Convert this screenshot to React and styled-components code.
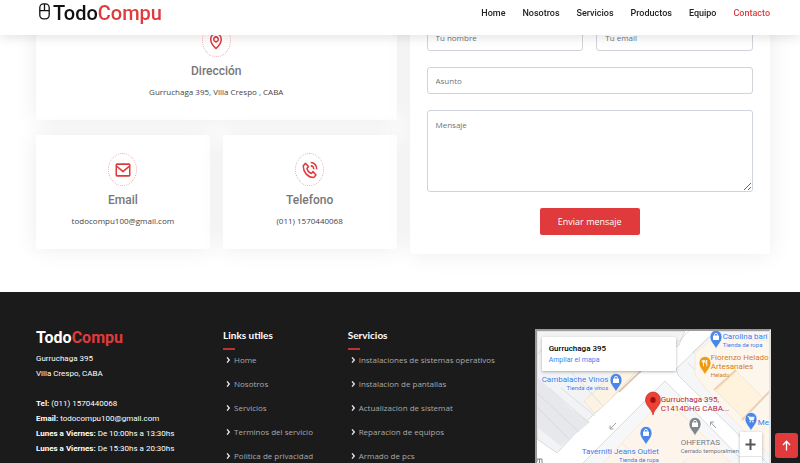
import React from 'react';
import styled, { createGlobalStyle, css } from 'styled-components';
import { BiMap, BiEnvelope, BiPhoneCall, BiChevronRight } from 'react-icons/bi';

const RED = '#e03a3c';
const BODY = '"Open Sans", "Noto Sans", sans-serif';
const HEAD = 'Roboto, "Liberation Sans", sans-serif';

const GlobalStyle = createGlobalStyle`
  *, *::before, *::after { box-sizing: border-box; }
  body { margin: 0; background: #fff; color: #444; font-family: ${BODY}; font-size: 8px; }
  h2, h3, h4, p, ul { margin: 0; padding: 0; }
  ul { list-style: none; }
  a { text-decoration: none; }
`;

const Page = styled.div`
  height: 100vh;
  overflow-y: auto;
  scrollbar-width: none;
`;

/* Header */
const Header = styled.header`
  position: fixed;
  inset: 0 0 auto;
  z-index: 10;
  display: flex;
  align-items: center;
  justify-content: space-between;
  height: 35px;
  padding: 0 30px 9px 36px;
  background: #fff;
  box-shadow: 0 2px 12px rgba(0, 0, 0, 0.12);
`;

const Brand = styled.a`
  display: flex;
  align-items: center;
  gap: 3px;
  padding-left: 3px;
  font: 500 20px/24px ${HEAD};
  color: #111;
  span { color: ${RED}; }
  svg { width: 11px; height: 17px; margin-bottom: 3px; }
`;

const Nav = styled.nav`
  display: flex;
  gap: 17px;
`;

const NavLink = styled.a`
  font: 500 9px/12px ${HEAD};
  color: ${(p) => (p.$active ? RED : '#222')};
`;

/* Contact */
const Contact = styled.main`
  display: grid;
  grid-template-columns: 1fr 1fr;
  align-items: start;
  gap: 13px;
  padding: 6px 30px 38px 36px;
  background: #fff;
`;

const cardSurface = css`
  background: #fff;
  border-radius: 2px;
  box-shadow: 0 0 24px rgba(0, 0, 0, 0.08);
`;

const InfoGrid = styled.div`
  display: grid;
  grid-template-columns: 1fr 1fr;
  gap: 15px 13px;
`;

const InfoCard = styled.section`
  ${cardSurface}
  grid-column: ${(p) => (p.$wide ? '1 / -1' : 'auto')};
  display: flex;
  flex-direction: column;
  align-items: center;
  padding: 18px 8px 22px;
  text-align: center;
`;

const IconRing = styled.div`
  display: grid;
  place-items: center;
  width: 29px;
  height: 33px;
  border: 1px dotted #eeb0b1;
  border-radius: 50%;
  color: ${RED};
  svg { width: 18px; height: 20px; }
`;

const InfoTitle = styled.h3`
  margin-top: 6px;
  font: 500 12px/16px ${HEAD};
  color: #777;
`;

const InfoText = styled.p`
  margin-top: 7px;
  line-height: 12px;
`;

const Form = styled.form`
  ${cardSurface}
  display: grid;
  grid-template-columns: 1fr 1fr;
  gap: 16px 13px;
  padding: 18px 17px 19px;
`;

const field = css`
  display: block;
  width: 100%;
  min-width: 0;
  padding: 0 8px;
  border: 1px solid #ced4da;
  border-radius: 3px;
  background: #fff;
  color: #444;
  font: 8px/12px ${BODY};
  &::placeholder { color: #6c757d; opacity: 1; }
`;

const Input = styled.input`
  ${field}
  height: 27px;
  grid-column: ${(p) => (p.$wide ? '1 / -1' : 'auto')};
`;

const TextArea = styled.textarea`
  ${field}
  grid-column: 1 / -1;
  height: 82px;
  padding-top: 8px;
  resize: vertical;
`;

const Submit = styled.button`
  grid-column: 1 / -1;
  justify-self: center;
  width: 100px;
  height: 27px;
  border: 0;
  border-radius: 2px;
  background: ${RED};
  color: #fff;
  font: 9px/12px ${BODY};
  cursor: pointer;
`;

/* Footer */
const Footer = styled.footer`
  display: grid;
  grid-template-columns: repeat(12, minmax(0, 1fr));
  align-items: start;
  gap: 13px;
  padding: 36px 29px 30px 36px;
  background: #1b1b1b;
  color: #fff;
`;

const Column = styled.section`
  grid-column: span ${(p) => p.$span};
`;

const FooterBrand = styled.h2`
  font: 700 16px/20px ${HEAD};
  span { color: ${RED}; }
`;

const Address = styled.p`
  margin-top: ${(p) => (p.$spaced ? 15 : 3)}px;
  font: 400 8px/15px ${HEAD};
  white-space: nowrap;
`;

const FooterTitle = styled.h4`
  font: 700 10px/14px Lato, ${HEAD};
  &::after {
    content: '';
    display: block;
    width: 12px;
    height: 2px;
    margin-top: 6px;
    background: #b93234;
  }
`;

const LinkList = styled.ul`
  display: grid;
  gap: 12px;
  margin-top: 4px;
`;

const FooterLink = styled.a`
  display: flex;
  align-items: center;
  gap: 1px;
  color: #aaa;
  line-height: 12px;
  white-space: nowrap;
  svg { flex: none; width: 10px; height: 12px; color: #fff; stroke: #fff; stroke-width: 1; }
`;

/* Map */
const MapFrame = styled.section`
  grid-column: span 4;
  position: relative;
  height: 164px;
  margin-top: 1px;
  overflow: hidden;
  border: 2px solid #9b9b9b;
  border-right-color: #e4e4e4;
  background: #f3f4f6;
  font-family: ${HEAD};
`;

const MapDrawing = styled.svg`
  display: block;
  width: 100%;
  height: 100%;
`;

const Place = styled.div`
  position: absolute;
  left: ${(p) => p.$x}px;
  top: ${(p) => p.$y}px;
  color: ${(p) => p.$color};
  font-size: 8px;
  line-height: 9px;
  text-align: ${(p) => p.$align || 'left'};
  white-space: nowrap;
  text-shadow: 0 0 1px #fff, 0 0 2px #fff;
  small { display: block; font-size: 6px; line-height: 7px; }
`;

const MapCard = styled.div`
  position: absolute;
  left: 5px;
  top: 6px;
  display: flex;
  flex-direction: column;
  gap: 1px;
  width: 134px;
  height: 34px;
  padding: 6px 7px;
  background: #fff;
  border-radius: 1px;
  box-shadow: 0 1px 3px rgba(0, 0, 0, 0.3);
  strong { font-size: 8px; line-height: 11px; font-weight: 500; color: #000; }
  a { font-size: 7px; line-height: 11px; color: #427fed; }
`;

const ZoomBox = styled.div`
  position: absolute;
  top: 101px;
  right: 7px;
  display: grid;
  width: 22px;
  background: #fff;
  box-shadow: 0 1px 3px rgba(0, 0, 0, 0.3);
`;

const ZoomButton = styled.button`
  display: grid;
  place-items: center;
  height: 25px;
  padding: 0;
  border: 0;
  border-bottom: 1px solid #e6e6e6;
  background: none;
  svg { width: 11px; height: 13px; }
`;

const BackToTop = styled.a`
  position: fixed;
  right: 2px;
  bottom: 5px;
  z-index: 11;
  display: grid;
  place-items: center;
  width: 23px;
  height: 25px;
  border-radius: 3px;
  background: ${RED};
  svg { width: 9px; height: 11px; }
`;

function MouseIcon() {
  return (
    <svg viewBox="0 0 11 17" fill="none" stroke="#111" strokeWidth="1.3" aria-hidden="true">
      <rect x="0.8" y="0.9" width="9.4" height="15" rx="3.8" />
      <path d="M0.8 7.6H10.2M5.5 0.9V7.6" />
    </svg>
  );
}

const glyphs = {
  bag: <><rect x="-3" y="-1.5" width="6" height="4.5" rx="0.5" fill="#fff" /><path d="M-1.5 -1.3V-2.2A1.5 1.5 0 0 1 1.5 -2.2V-1.3" fill="none" stroke="#fff" strokeWidth="0.9" /></>,
  fork: <path d="M-1.5 3.2V-3M-2.7 -3V-0.8H-0.3V-3M1.8 3.2V-3Q0.7 -2 0.9 0.4H1.8" fill="none" stroke="#fff" strokeWidth="0.9" />,
  cart: <><path d="M-3.3 -2.6H-2.2L-1.1 1.1H2.2L3.2 -1.8H-2" fill="#fff" stroke="#fff" strokeWidth="0.8" /><circle cx="-0.8" cy="2.7" r="0.8" fill="#fff" /><circle cx="1.9" cy="2.7" r="0.8" fill="#fff" /></>,
};

function Pin({ x, y, color, glyph }) {
  return (
    <g transform={`translate(${x} ${y})`}>
      <path d="M0 12C-0.9 8.6 -6 5 -6 0A6 6.6 0 0 1 6 0C6 5 0.9 8.6 0 12Z" fill={color} stroke="#fff" strokeWidth="0.6" />
      {glyphs[glyph]}
    </g>
  );
}

function StreetMap() {
  return (
    <MapDrawing viewBox="0 0 233 160" preserveAspectRatio="xMinYMin slice" aria-hidden="true">
      <rect width="233" height="160" fill="#fff" />
      <g stroke="#cfd3d8" strokeWidth="0.8">
        <path d="M0 0H148L142 14L102 41L52 88L20 122L0 108Z" fill="#f1f3f5" />
        <path d="M139 38L179 0H233V135L141 44Z" fill="#f4f6f8" />
        <path d="M128 50L212 136L236 160H18L48 130Z" fill="#f6f7f9" />
      </g>
      <path d="M0 46L34 78L53 91L24 115L0 96Z" fill="#e6e8eb" />
      <path d="M57 82L47 70L84 36H103L67 75Z" fill="#fdf3e4" stroke="#f3dfc4" strokeWidth="0.8" />
      <path d="M82 61L104 40" fill="none" stroke="#e3bf9c" strokeWidth="1.5" />
      <g fill="none" stroke="#d3d6da" strokeWidth="0.7">
        <path d="M0 62L42 101M12 57L51 91M24 57L58 85M0 24L5 18M35 42L66 75M0 76L32 108" />
        <path d="M138 14L152 0M155 22L178 0M151 32L160 41" />
      </g>
      <path d="M128 66L193 131L205 160H45L68 130Z" fill="#fdf5eb" stroke="#fae6cd" strokeWidth="0.8" />
      <path d="M85 112L106 131L78 160M128 66L150 88M118 160L150 128" fill="none" stroke="#f6e2ca" strokeWidth="0.8" />
      <path d="M158 22L178 6L233 10V124L217 110L186 78L158 44Z" fill="#fdf6ec" stroke="#fae6cd" strokeWidth="0.8" />
      <path d="M199 40L226 67L206 87L179 60Z" fill="#fff3dd" stroke="#f7dfbd" strokeWidth="0.8" />
      <path d="M199 39L177 59M233 60L205 89" fill="none" stroke="#ebd0b8" strokeWidth="2" />
      <g fill="none" stroke="#9aa0a6" strokeWidth="1">
        <path d="M79 92L73 98M73 94.5V98H76.5M179 97L173.5 91M173.5 94.5V91H177" />
      </g>
      <Pin x={179} y={6} color="#4a86e8" glyph="bag" />
      <Pin x={168} y={32} color="#f09a14" glyph="fork" />
      <Pin x={79} y={49} color="#4a86e8" glyph="bag" />
      <Pin x={109} y={102} color="#4a86e8" glyph="bag" />
      <Pin x={158} y={93} color="#80868b" glyph="bag" />
      <Pin x={214} y={88} color="#4a86e8" glyph="cart" />
      <path d="M116 84C115 78 108.5 75 108.5 69A7.5 8 0 0 1 123.5 69C123.5 75 117 78 116 84Z" fill="#ea4335" stroke="#c5221f" strokeWidth="0.6" />
      <ellipse cx="116" cy="69" rx="2.7" ry="3" fill="#a50e0e" />
      <path d="M0 131V128H5V132M2.5 128V132" fill="none" stroke="#5f6368" strokeWidth="0.8" />
    </MapDrawing>
  );
}

const navItems = ['Home', 'Nosotros', 'Servicios', 'Productos', 'Equipo', 'Contacto'];
const usefulLinks = ['Home', 'Nosotros', 'Servicios', 'Terminos del servicio', 'Politica de privacidad'];
const services = ['Instalaciones de sistemas operativos', 'Instalacion de pantallas', 'Actualizacion de sistemat', 'Reparacion de equipos', 'Armado de pcs'];

function Info({ icon: Icon, title, text, wide }) {
  return (
    <InfoCard $wide={wide}>
      <IconRing><Icon preserveAspectRatio="none" aria-hidden="true" /></IconRing>
      <InfoTitle>{title}</InfoTitle>
      <InfoText>{text}</InfoText>
    </InfoCard>
  );
}

function FooterLinks({ title, items, span }) {
  return (
    <Column $span={span}>
      <FooterTitle>{title}</FooterTitle>
      <LinkList>
        {items.map((item) => (
          <li key={item}>
            <FooterLink href="#"><BiChevronRight preserveAspectRatio="none" aria-hidden="true" />{item}</FooterLink>
          </li>
        ))}
      </LinkList>
    </Column>
  );
}

export default function App() {
  return (
    <Page>
      <GlobalStyle />
      <Header>
        <Brand href="#"><MouseIcon /><div>Todo<span>Compu</span></div></Brand>
        <Nav>
          {navItems.map((item) => (
            <NavLink key={item} href="#" $active={item === 'Contacto'}>{item}</NavLink>
          ))}
        </Nav>
      </Header>

      <Contact>
        <InfoGrid>
          <Info wide icon={BiMap} title="Dirección" text="Gurruchaga 395, Villa Crespo , CABA" />
          <Info icon={BiEnvelope} title="Email" text="todocompu100@gmail.com" />
          <Info icon={BiPhoneCall} title="Telefono" text="(011) 1570440068" />
        </InfoGrid>
        <Form onSubmit={(e) => e.preventDefault()}>
          <Input type="text" placeholder="Tu nombre" aria-label="Tu nombre" />
          <Input type="email" placeholder="Tu email" aria-label="Tu email" />
          <Input $wide type="text" placeholder="Asunto" aria-label="Asunto" />
          <TextArea placeholder="Mensaje" aria-label="Mensaje" />
          <Submit type="submit">Enviar mensaje</Submit>
        </Form>
      </Contact>

      <Footer>
        <Column $span={3}>
          <FooterBrand>Todo<span>Compu</span></FooterBrand>
          <Address>Gurruchaga 395<br />Villa Crespo, CABA</Address>
          <Address $spaced>
            <strong>Tel:</strong> (011) 1570440068<br />
            <strong>Email:</strong> todocompu100@gmail.com<br />
            <strong>Lunes a Viernes:</strong> De 10:00hs a 13:30hs<br />
            <strong>Lunes a Viernes:</strong> De 15:30hs a 20:30hs
          </Address>
        </Column>
        <FooterLinks span={2} title="Links utiles" items={usefulLinks} />
        <FooterLinks span={3} title="Servicios" items={services} />
        <MapFrame aria-label="Mapa">
          <StreetMap />
          <Place $x={186} $y={1} $color="#3b78e7">Carolina bari<small>Tienda de ropa</small></Place>
          <Place $x={174} $y={22} $color="#d5780c">Fiorenzo Helado<br />Artesanales<small>Helado</small></Place>
          <Place $x={5} $y={44} $color="#3b78e7" $align="right">Cambalache Vinos<small>Tienda de vinos</small></Place>
          <Place $x={124} $y={64} $color="#b3261e">Gurruchaga 395,<br />C1414DHG CABA...</Place>
          <Place $x={144} $y={107} $color="#70757a">OHFERTAS<small>Cerrado temporalmen</small></Place>
          <Place $x={45} $y={116} $color="#3b78e7" $align="right">Taverniti Jeans Outlet<small>Tienda de ropa</small></Place>
          <Place $x={221} $y={87} $color="#3b78e7">Me</Place>
          <MapCard><strong>Gurruchaga 395</strong><a href="#">Ampliar el mapa</a></MapCard>
          <ZoomBox>
            <ZoomButton type="button" aria-label="Acercar">
              <svg viewBox="0 0 11 13" stroke="#555" strokeWidth="2"><path d="M0.5 6.5H10.5M5.5 1V12" /></svg>
            </ZoomButton>
            <ZoomButton type="button" aria-label="Alejar">
              <svg viewBox="0 0 11 13" stroke="#555" strokeWidth="2"><path d="M0.5 6.5H10.5" /></svg>
            </ZoomButton>
          </ZoomBox>
        </MapFrame>
      </Footer>

      <BackToTop href="#" aria-label="Volver arriba">
        <svg viewBox="0 0 9 11" fill="none" stroke="#fff" strokeWidth="1.3"><path d="M4.5 10.5V1.2M1 5L4.5 1.2L8 5" /></svg>
      </BackToTop>
    </Page>
  );
}
